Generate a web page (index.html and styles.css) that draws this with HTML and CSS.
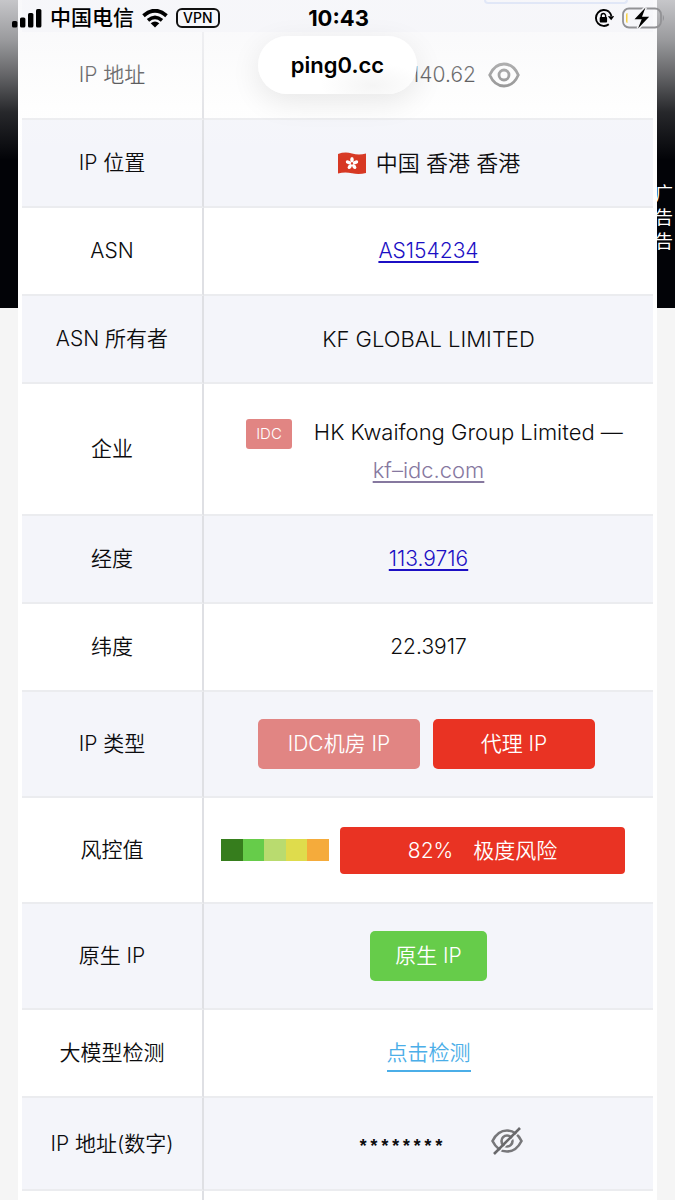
FILE: index.html
```html
<!DOCTYPE html>
<html lang="zh-CN">
<head>
<meta charset="utf-8">
<meta name="viewport" content="width=device-width, initial-scale=1">
<title>ping0.cc</title>
<link rel="stylesheet" href="styles.css">
</head>
<body>
<div class="page">
  <header class="chrome">
    <div class="status">
      <div class="status-left">
        <svg width="30" height="19" viewBox="0 0 30 19"><rect x="0" y="12" width="5.4" height="6.5" rx="1.6"/><rect x="8" y="8.500" width="5.400" height="10" rx="1.600"/><rect x="16" y="4" width="5.400" height="14.500" rx="1.600"/><rect x="24" y="0" width="5.400" height="18.500" rx="1.600"/></svg>
        <span class="carrier">中国电信</span>
        <svg width="26" height="19" viewBox="0 0 26 19" fill="none" stroke="#000"><path d="M1.500 6.700Q13-3.300 24.500 6.700" stroke-width="3.800"/><path d="M6 11.300Q13 5.300 20 11.300" stroke-width="3.600"/><path d="M8.700 14.200Q13 10.800 17.300 14.200L13 18.600Z" fill="#000" stroke="none"/></svg>
        <span class="vpn">VPN</span>
      </div>
      <time class="clock">10:43</time>
      <div class="status-right">
        <svg width="20" height="20" viewBox="0 0 20 20" fill="none" stroke="#000" stroke-width="1.900"><path d="M14.800 3.600A8 8 0 1 0 14.800 16.300M14.800 3.600A8 8 0 0 1 17.400 8"/><path d="M13.800 8.200h6.400L17.200 12.200Z" fill="#000" stroke="none"/><rect x="5.700" y="9" width="7.400" height="5.500" rx="1" fill="#000" stroke="none"/><path d="M7.200 9.500V7.700a2.200 2.200 0 0 1 4.400 0v1.800" stroke-width="1.400"/></svg>
        <svg width="43" height="22" viewBox="0 0 43 22"><rect x="1" y="1.500" width="38" height="19" rx="6" fill="none" stroke="#929295" stroke-width="1.800"/><path d="M40.800 7.500q2.400 3.500 0 7z" fill="#929295"/><path d="M5.500 6q-1.500 0-1.500 2v6q0 2 1.500 2z" fill="#f6cf42"/><path d="M23.500.500L12.500 12.200h7.200L16 21.500 27.200 9.800H20z" fill="#000" stroke="#f5f5f8" stroke-width="3" paint-order="stroke"/></svg>
      </div>
    </div>
    <div class="address">ping0.cc</div>
  </header>

  <aside class="ad-label">广告告</aside>

  <main class="card">
    <div class="above"><div class="above-box"></div></div>
    <table class="info">
      <tbody>
      <tr><th scope="row">IP 地址</th><td><div class="line"><span class="ip">140.62</span><button class="eye" type="button" aria-label="显示"><svg width="32" height="26" viewBox="0 0 32 26" fill="none" stroke="#6c6c6c" stroke-width="2.800"><path d="M1.700 13C5 5.500 10.500 2 16 2S27 5.500 30.300 13C27 20.500 21.500 24 16 24S5 20.500 1.700 13Z"/><circle cx="16" cy="13" r="5"/></svg></button></div></td></tr>
      <tr><th scope="row">IP 位置</th><td><div class="line place"><svg width="30" height="23" viewBox="0 0 30 23"><path d="M1 2Q8-.500 15 1.500T29 1.500V21Q22 23 15 21.300T1 21.500Z" fill="#d73823"/><g fill="#fff" transform="translate(15 11.500)"><ellipse cy="-3.700" rx="1.800" ry="2.800"/><ellipse cy="-3.700" rx="1.800" ry="2.800" transform="rotate(72)"/><ellipse cy="-3.700" rx="1.800" ry="2.800" transform="rotate(144)"/><ellipse cy="-3.700" rx="1.800" ry="2.800" transform="rotate(216)"/><ellipse cy="-3.700" rx="1.800" ry="2.800" transform="rotate(288)"/></g></svg><span>中国 香港 香港</span></div></td></tr>
      <tr><th scope="row">ASN</th><td><a href="#asn">AS154234</a></td></tr>
      <tr><th scope="row">ASN 所有者</th><td class="name">KF GLOBAL LIMITED</td></tr>
      <tr class="company"><th scope="row">企业</th><td class="name"><span class="tag">IDC</span>HK Kwaifong Group Limited — <a class="visited" href="#company">kf–idc.com</a></td></tr>
      <tr><th scope="row">经度</th><td><a href="#map">113.9716</a></td></tr>
      <tr><th scope="row">纬度</th><td>22.3917</td></tr>
      <tr class="tall"><th scope="row">IP 类型</th><td><div class="line types"><span class="badge wide pink">IDC机房 IP</span><span class="badge wide red">代理 IP</span></div></td></tr>
      <tr class="tall"><th scope="row">风控值</th><td><div class="risk"><div class="scale"><i class="s1"></i><i class="s2"></i><i class="s3"></i><i class="s4"></i><i class="s5"></i></div><div class="risk-value red"><span>82%</span><span>极度风险</span></div></div></td></tr>
      <tr class="tall"><th scope="row">原生 IP</th><td><span class="badge green">原生 IP</span></td></tr>
      <tr><th scope="row">大模型检测</th><td><a class="check" href="#check">点击检测</a></td></tr>
      <tr class="number"><th scope="row">IP 地址(数字)</th><td><div class="line masked"><span class="stars">********</span><button class="eye" type="button" aria-label="隐藏"><svg width="32" height="28" viewBox="0 0 32 28" fill="none" stroke="#77777a" stroke-width="2.600"><path d="M1.500 14C5 7 10.500 3.500 16 3.500S27 7 30.500 14C27 21 21.500 24.500 16 24.500S5 21 1.500 14Z"/><circle cx="16" cy="14" r="5.500"/><path d="M5 28L31 2" stroke="#f4f5fa" stroke-width="1.500"/><path d="M3 27L29 1" stroke="#68686b" stroke-width="2.600"/></svg></button></div></td></tr>
      <tr class="next"><th></th><td></td></tr>
      </tbody>
    </table>
  </main>
</div>
</body>
</html>
```
FILE: styles.css
```css
* { box-sizing: border-box; }
body {
  margin: 0;
  background: #f5f5f5;
  color: #0c0c0e;
  font: 21px/38px Inter, "Noto Sans CJK SC", sans-serif;
}
svg { display: block; flex: none; }

.page {
  position: relative;
  min-height: 100vh;
  overflow: hidden;
  padding: 0 18px;
  background: linear-gradient(#020307, #020307) 0 0 / 100% 308px no-repeat;
}

/* Browser chrome floating over the page */
.chrome {
  position: absolute;
  inset: 0 0 auto;
  z-index: 2;
  height: 160px;
  background: linear-gradient(rgba(247, 247, 250, .8), rgba(247, 247, 249, .62) 40px, rgba(248, 248, 249, .4) 75px, rgba(250, 250, 250, .15) 112px, rgba(255, 255, 255, 0));
  color: #000;
}
.status {
  display: grid;
  grid-template-columns: 1fr auto 1fr;
  align-items: center;
  height: 36px;
  padding: 0 10px 0 12px;
}
.status-left, .status-right { display: flex; align-items: center; }
.status-left { gap: 8px; }
.status-right { justify-content: flex-end; gap: 8px; }
.carrier { font-size: 21px; font-weight: 500; line-height: 36px; }
.vpn {
  padding: 0 5px;
  border: 2px solid #111;
  border-radius: 6px;
  font-size: 14px;
  font-weight: 500;
  line-height: 16px;
}
.clock { font-size: 22px; font-weight: 700; line-height: 36px; }
.address {
  width: max-content;
  margin: 0 auto;
  padding: 0 33px;
  border-radius: 29px;
  background: radial-gradient(ellipse at 72% 85%, #f5f5f5, #fff 32%);
  box-shadow: 0 8px 30px rgba(0, 0, 0, .09);
  font-size: 22px;
  font-weight: 600;
  line-height: 58px;
}

.ad-label {
  position: absolute;
  top: 182px;
  right: 2px;
  width: 18px;
  color: #fff;
  font-size: 18px;
  line-height: 24px;
  word-break: break-all;
}

.card { position: relative; z-index: 1; padding: 0 4px; background: #fff; }
.above {
  display: flex;
  justify-content: flex-end;
  height: 32px;
  padding-right: 25px;
  background: #f4f5fa;
}
.above-box {
  width: 144px;
  height: 4px;
  border: 2px solid #8facec;
  border-top: 0;
  border-radius: 0 0 8px 8px;
}

.info { width: 100%; border-collapse: separate; border-spacing: 0; table-layout: fixed; }
.info th, .info td {
  height: 88px;
  padding: 0;
  border-bottom: 2px solid #ebecef;
  font-weight: 350;
  text-align: center;
  vertical-align: middle;
}
.info th { width: 182px; border-right: 2px solid #dfe0e4; }
.info tr:nth-child(even) { background: #f4f5fa; }
.info .name, .place { font-size: 22px; }
.info .company th, .info .company td { height: 132px; }
.info .company td { padding: 4px 20px 0; }
.info .tall th, .info .tall td { height: 106px; }
.info .number th, .info .number td { height: 93px; }
.info .next th, .info .next td { height: 9px; border-bottom: 0; }

a { color: #1c0fc4; text-decoration-thickness: 2px; text-underline-offset: 3px; }
.visited { color: #86789f; }
.check { padding-bottom: 5px; border-bottom: 2px solid #4baee8; color: #4baee8; text-decoration: none; }

.line { display: flex; align-items: center; justify-content: center; }
.place { gap: 9px; }
.ip { padding-left: 74px; }
.eye { margin-left: 12px; padding: 0; border: 0; background: none; }
.masked .eye { margin-left: 47px; padding-bottom: 6px; }
.masked { padding-left: 24px; }
.stars { padding-top: 6px; font-family: "Liberation Mono", monospace; font-size: 18px; font-weight: 700; }

.tag {
  display: inline-block;
  margin: 0 22px 0 12px;
  padding: 0 10px;
  border-radius: 3px;
  background: #e18583;
  color: #fff;
  font-size: 15px;
  font-weight: 300;
  line-height: 30px;
  vertical-align: middle;
}
.types { gap: 13px; padding-right: 4px; }
.badge {
  display: inline-block;
  padding: 0 25px;
  border-radius: 5px;
  color: #fff;
  line-height: 50px;
  vertical-align: middle;
}
.wide { width: 162px; padding: 0; }
.pink { background: #e18583; }
.red { background: #e93323; }
.green { background: #66cc4a; }

.risk { display: flex; align-items: center; gap: 11px; padding: 0 28px 0 17px; }
.scale { display: flex; flex: none; width: 108px; height: 22px; }
.scale i { flex: 1; }
.s1 { background: #367d1d; }
.s2 { background: #66cc4a; }
.s3 { background: #b9db6f; }
.s4 { background: #dfdc4c; }
.s5 { background: #f5ab3b; }
.risk-value {
  display: flex;
  flex: 1;
  justify-content: center;
  gap: 20px;
  border-radius: 4px;
  color: #fff;
  line-height: 47px;
}
```
